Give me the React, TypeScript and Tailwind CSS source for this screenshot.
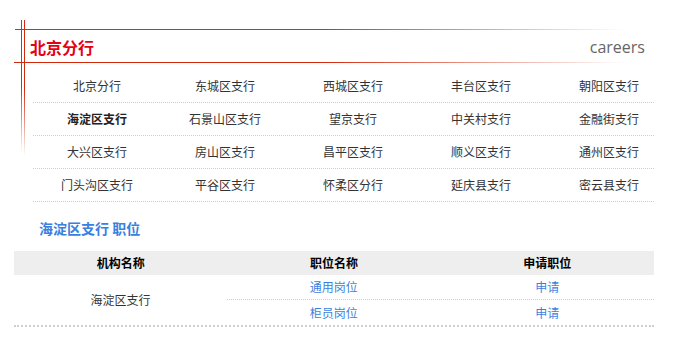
import React from 'react';

const branches = [
  ['北京分行', '东城区支行', '西城区支行', '丰台区支行', '朝阳区支行'],
  ['海淀区支行', '石景山区支行', '望京支行', '中关村支行', '金融街支行'],
  ['大兴区支行', '房山区支行', '昌平区支行', '顺义区支行', '通州区支行'],
  ['门头沟区支行', '平谷区支行', '怀柔区分行', '延庆县支行', '密云县支行'],
];

const jobs = ['通用岗位', '柜员岗位'];

const cjk = { fontFamily: '"Noto Sans CJK SC", "Microsoft YaHei", sans-serif' };

const App: React.FC = () => {
  return (
    <div className="relative w-[700px] h-[342px] bg-white overflow-hidden" style={cjk}>
      {/* decorative frame lines */}
      <div className="absolute left-[21px] top-[20px] w-px h-[132px] bg-gradient-to-b from-[#1f6ea6] via-[#1f6ea6] to-transparent" />
      <div className="absolute left-[24px] top-[20px] w-px h-[136px] bg-gradient-to-b from-[#d2280c] via-[#d2280c] to-transparent" />
      <div className="absolute left-[15px] top-[29px] w-[610px] h-px bg-gradient-to-r from-[#1f6ea6] via-[#1f6ea6] to-transparent" />
      <div className="absolute left-[14px] top-[62px] w-[611px] h-px bg-gradient-to-r from-[#d2280c] via-[#d2280c] to-transparent" />

      {/* header */}
      <div className="flex items-center justify-between h-[33px] mt-[30px] pl-[30px] pr-[55px]">
        <h1 className="text-[16px] leading-none font-bold text-[#e60012]">北京分行</h1>
        <span className="text-[16px] leading-none text-[#666]" style={{ fontFamily: '"Open Sans", sans-serif' }}>
          careers
        </span>
      </div>

      {/* branch grid */}
      <div className="ml-[33px] mt-[7px] w-[621px]">
        {branches.map((row, i) => (
          <div key={i} className="flex h-[33px] border-b border-dotted border-[#cfcfcf]">
            {row.map((name) => (
              <div
                key={name}
                className={`w-[128px] shrink-0 flex items-center justify-center text-[12px] ${
                  name === '海淀区支行' ? 'font-bold text-[#222]' : 'text-[#333]'
                }`}
              >
                {name}
              </div>
            ))}
          </div>
        ))}
      </div>

      {/* position heading */}
      <h2 className="ml-[39px] mt-[16px] text-[14px] leading-[20px] font-bold text-[#3a80e0]">海淀区支行 职位</h2>

      {/* table */}
      <div className="ml-[14px] mt-[13px] w-[640px] text-[12px]">
        <div className="grid grid-cols-3 h-[24px] bg-[#eeeeee] font-bold text-black">
          <div className="flex items-center justify-center">机构名称</div>
          <div className="flex items-center justify-center">职位名称</div>
          <div className="flex items-center justify-center">申请职位</div>
        </div>
        <div className="flex border-b-2 border-dotted border-[#cfcfcf]">
          <div className="w-[213px] flex items-center justify-center text-[#333]">海淀区支行</div>
          <div className="flex-1">
            {jobs.map((job, i) => (
              <div
                key={job}
                className={`grid grid-cols-2 h-[25px] ${i === 0 ? 'border-b border-dotted border-[#cfcfcf]' : ''}`}
              >
                <div className="flex items-center justify-center text-[#3d7fe0]">{job}</div>
                <div className="flex items-center justify-center text-[#3d7fe0]">申请</div>
              </div>
            ))}
          </div>
        </div>
      </div>
    </div>
  );
};

export default App;
